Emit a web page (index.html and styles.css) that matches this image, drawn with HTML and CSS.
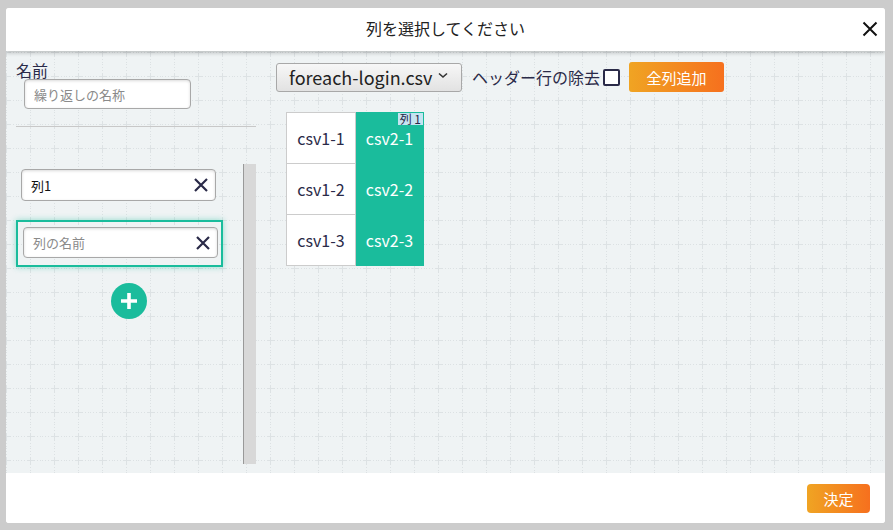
FILE: index.html
```html
<!DOCTYPE html>
<html lang="ja">
<head>
<meta charset="utf-8">
<title>列を選択してください</title>
<link rel="stylesheet" href="styles.css">
</head>
<body>
<div class="dialog">
  <div class="header">
    <div class="title">列を選択してください</div>
    <button class="close" aria-label="close">
      <svg width="16" height="16" viewBox="0 0 16 16"><path d="M1.5 1.5L14.5 14.5M14.5 1.5L1.5 14.5" stroke="#111" stroke-width="2" fill="none"/></svg>
    </button>
  </div>
  <div class="main">
    <div class="left">
      <div class="name-label">名前</div>
      <input class="text-input name-input" placeholder="繰り返しの名称">
      <div class="divider"></div>
      <div class="list-area">
        <div class="items">
          <div class="item">
            <div class="text-input col-input"><span class="val">列1</span>
              <svg class="x" width="16" height="16" viewBox="0 0 16 16"><path d="M2 2L14 14M14 2L2 14" stroke="#2a2a48" stroke-width="2.2" fill="none"/></svg>
            </div>
          </div>
          <div class="item selected">
            <div class="text-input col-input"><span class="ph">列の名前</span>
              <svg class="x" width="16" height="16" viewBox="0 0 16 16"><path d="M2 2L14 14M14 2L2 14" stroke="#2a2a48" stroke-width="2.2" fill="none"/></svg>
            </div>
          </div>
          <div class="add">
            <svg width="36" height="36" viewBox="0 0 36 36"><circle cx="18" cy="18" r="18" fill="#1abc9c"/><path d="M18 10V26M10 18H26" stroke="#fff" stroke-width="3.6"/></svg>
          </div>
        </div>
        <div class="scrollbar"></div>
      </div>
    </div>
    <div class="right">
      <div class="toolbar">
        <div class="select">foreach-login.csv
          <svg width="10" height="7" viewBox="0 0 10 7"><path d="M1 1.5L5 5L9 1.5" stroke="#333" stroke-width="1.6" fill="none"/></svg>
        </div>
        <label class="header-remove">ヘッダー行の除去<span class="checkbox"></span></label>
        <button class="btn-orange add-all">全列追加</button>
      </div>
      <table class="csv">
        <tr><td class="c1">csv1-1</td><td class="c2">csv2-1<span class="badge">列 1</span></td></tr>
        <tr><td class="c1">csv1-2</td><td class="c2">csv2-2</td></tr>
        <tr><td class="c1">csv1-3</td><td class="c2">csv2-3</td></tr>
      </table>
    </div>
  </div>
  <div class="footer">
    <button class="btn-orange ok">決定</button>
  </div>
</div>
</body>
</html>
```

FILE: styles.css
```css
* { box-sizing: border-box; }
html, body { margin: 0; padding: 0; }
body {
  background: #cccccc;
  width: 893px;
  height: 530px;
  overflow: hidden;
  font-family: "Noto Sans CJK JP", "Noto Sans", sans-serif;
  color: #2a2a48;
}
.dialog {
  margin: 8px 0 0 6px;
  width: 879px;
  height: 515px;
  background: #fff;
  border-radius: 3px;
  display: flex;
  flex-direction: column;
  overflow: hidden;
}
.header {
  position: relative;
  z-index: 2;
  height: 43px;
  flex: none;
  background: #fff;
  box-shadow: 0 2px 4px rgba(0,0,0,0.22);
  display: flex;
  align-items: center;
  justify-content: center;
}
.title {
  font-size: 16px;
  color: #222;
  margin-top: -3px;
}
.close {
  position: absolute;
  right: 7px;
  top: 13px;
  width: 16px;
  height: 16px;
  padding: 0;
  border: 0;
  background: none;
}
.close svg { display: block; }
.main {
  height: 422px;
  flex: none;
  display: flex;
  background-color: #eff3f4;
  background-image: url("data:image/svg+xml,%3Csvg xmlns='http://www.w3.org/2000/svg' width='24' height='24'%3E%3Cpath d='M16 12.5H24M0 12.5H9M12.5 0V9M12.5 16V24' stroke='%23dce1e3' stroke-width='1' stroke-dasharray='1 2' fill='none'/%3E%3Cpath d='M9 12.5H16M12.5 9V16' stroke='%23dde2e4' stroke-width='1' fill='none'/%3E%3C/svg%3E");
  background-position: 12px -11px;
}
.left {
  width: 240px;
  margin-left: 10px;
  padding-top: 10px;
  display: flex;
  flex-direction: column;
}
.name-label {
  font-size: 16px;
  line-height: 18px;
  color: #2a2a48;
}
.text-input {
  display: flex;
  align-items: center;
  height: 30px;
  border: 1px solid #a8a8a8;
  border-radius: 4px;
  background: #fff;
  box-shadow: inset 0 1px 3px rgba(0,0,0,0.15);
  font-family: "Noto Sans CJK JP", sans-serif;
  font-size: 13px;
  color: #222;
  padding: 0 9px;
  outline: none;
}
.text-input::placeholder { color: #8a8a8a; }
.name-input {
  margin-left: 8px;
  width: 167px;
}
.divider {
  margin-top: 17px;
  height: 1px;
  background: #c8c8c8;
}
.list-area {
  margin-top: 37px;
  display: flex;
  height: 300px;
}
.items {
  width: 207px;
  display: flex;
  flex-direction: column;
}
.item {
  padding: 5px;
  border: 2px solid transparent;
  margin-bottom: 12px;
}
.item:first-child {
  padding: 3px 5px 3px 3px;
  margin-bottom: 14px;
}
.item.selected {
  border-color: #1abc9c;
  box-shadow: 0 0 6px rgba(26,188,156,0.45);
  padding: 5px 3px 7px 5px;
}
.col-input {
  height: 32px;
  justify-content: space-between;
  padding: 0 6px 0 9px;
}
.item.selected .col-input { height: 31px; }
.col-input .ph { color: #8a8a8a; }
.col-input .val { color: #111; }
.col-input .x { display: block; }
.add {
  margin: 4px 0 0 95px;
  width: 36px;
  height: 36px;
}
.add svg { display: block; }
.scrollbar {
  margin-left: 20px;
  width: 13px;
  background: #d8d8d8;
  border-left: 1px solid #999;
}
.right {
  margin-left: 20px;
  padding-top: 11px;
  display: flex;
  flex-direction: column;
  align-items: flex-start;
}
.toolbar {
  display: flex;
  align-items: center;
  height: 30px;
}
.select {
  width: 186px;
  height: 29px;
  border: 1px solid #a8a8a8;
  border-radius: 3px;
  background: linear-gradient(#f7f7f7, #e2e2e2);
  font-size: 18px;
  color: #222;
  display: flex;
  align-items: center;
  padding-left: 12px;
  gap: 6px;
}
.select svg { margin-top: -3px; }
.header-remove {
  margin-left: 10px;
  font-size: 16px;
  color: #2a2a48;
  display: flex;
  align-items: center;
}
.checkbox {
  display: inline-block;
  width: 17px;
  height: 17px;
  border: 2px solid #2a2a48;
  border-radius: 2px;
  margin-left: 3px;
  background: #fff;
}
.btn-orange {
  border: 0;
  color: #fff;
  font-family: "Noto Sans CJK JP", sans-serif;
  font-size: 15px;
  background: linear-gradient(to right, #f0a423, #f6701e);
  border-radius: 3px;
  padding: 0;
}
.add-all {
  margin-left: 9px;
  width: 95px;
  height: 30px;
}
.csv {
  margin: 20px 0 0 10px;
  border-collapse: collapse;
  font-size: 16px;
}
.csv td {
  height: 51px;
  text-align: center;
  padding: 0;
}
.csv .c1 {
  width: 69px;
  background: #fff;
  color: #2a2a48;
  border: 1px solid #cccccc;
}
.csv .c2 {
  width: 68px;
  background: #1abc9c;
  color: #fff;
  position: relative;
  border: 1px solid #1abc9c;
  border-left: 0;
}
.badge {
  position: absolute;
  top: 0;
  right: 0;
  background: #c5e4f1;
  color: #2a2a48;
  font-size: 12px;
  line-height: 12px;
  padding: 0 2px;
}
.footer {
  flex: 1;
  background: #fff;
  display: flex;
  justify-content: flex-end;
  align-items: flex-start;
  padding: 11px 15px 0 0;
}
.ok {
  width: 63px;
  height: 29px;
  border-radius: 4px;
}
```
